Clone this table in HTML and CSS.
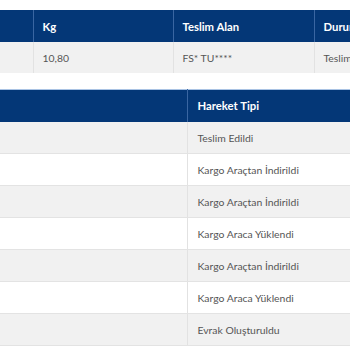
FILE: index.html
```html
<!DOCTYPE html>
<html>
<head>
<meta charset="utf-8">
<link rel="stylesheet" href="styles.css">
</head>
<body>
<div class="page">
  <table class="grid t1">
    <colgroup><col class="c0"><col class="c1"><col class="c2"><col class="c3"></colgroup>
    <thead>
      <tr><th></th><th>Kg</th><th>Teslim Alan</th><th>Durum</th></tr>
    </thead>
    <tbody>
      <tr class="odd"><td></td><td>10,80</td><td>FS* TU****</td><td>Teslim Edildi</td></tr>
    </tbody>
  </table>

  <table class="grid t2">
    <colgroup><col class="d0"><col class="d1"></colgroup>
    <thead>
      <tr><th></th><th>Hareket Tipi</th></tr>
    </thead>
    <tbody>
      <tr class="odd"><td></td><td>Teslim Edildi</td></tr>
      <tr><td></td><td>Kargo Araçtan İndirildi</td></tr>
      <tr class="odd"><td></td><td>Kargo Araçtan İndirildi</td></tr>
      <tr><td></td><td>Kargo Araca Yüklendi</td></tr>
      <tr class="odd"><td></td><td>Kargo Araçtan İndirildi</td></tr>
      <tr><td></td><td>Kargo Araca Yüklendi</td></tr>
      <tr class="odd"><td></td><td>Evrak Oluşturuldu</td></tr>
    </tbody>
  </table>
</div>
</body>
</html>
```

FILE: styles.css
```css
html, body {
  margin: 0;
  padding: 0;
  background: #fff;
  overflow: hidden;
}
.page {
  width: 350px;
  height: 350px;
  overflow: hidden;
  padding-top: 10px;
  box-sizing: border-box;
  font-family: Lato, "Open Sans", sans-serif;
}
.grid {
  border-collapse: collapse;
  table-layout: fixed;
}
.t1 { width: 460px; }
.t1 .c0 { width: 33px; }
.t1 .c1 { width: 140px; }
.t1 .c2 { width: 141px; }
.t1 .c3 { width: 146px; }
.t2 {
  width: 460px;
  margin-top: 16px;
  border-top: 1px solid #a9c3e4;
}
.t2 .d0 { width: 187px; }
.t2 .d1 { width: 273px; }
.grid th {
  background: #043777;
  color: #fff;
  font-weight: 700;
  font-size: 11.3px;
  text-align: left;
  height: 32px;
  padding: 0 0 0 9px;
  border-left: 1px solid #3a66a2;
  box-sizing: border-box;
  white-space: nowrap;
}
.grid th:first-child { border-left: none; }
.grid td {
  font-size: 10.4px;
  color: #555;
  height: 31px;
  box-sizing: border-box;
  padding: 1px 0 0 9px;
  border-left: 1px solid #e2e2e2;
  white-space: nowrap;
}
.grid td:first-child { border-left: none; }
.grid tbody tr.odd { background: #f1f1f1; }
.t2 td {
  height: 32px;
  padding-left: 10px;
  border-bottom: 1px solid #e3e3e3;
}
.t2 th { padding-left: 10px; }
```
